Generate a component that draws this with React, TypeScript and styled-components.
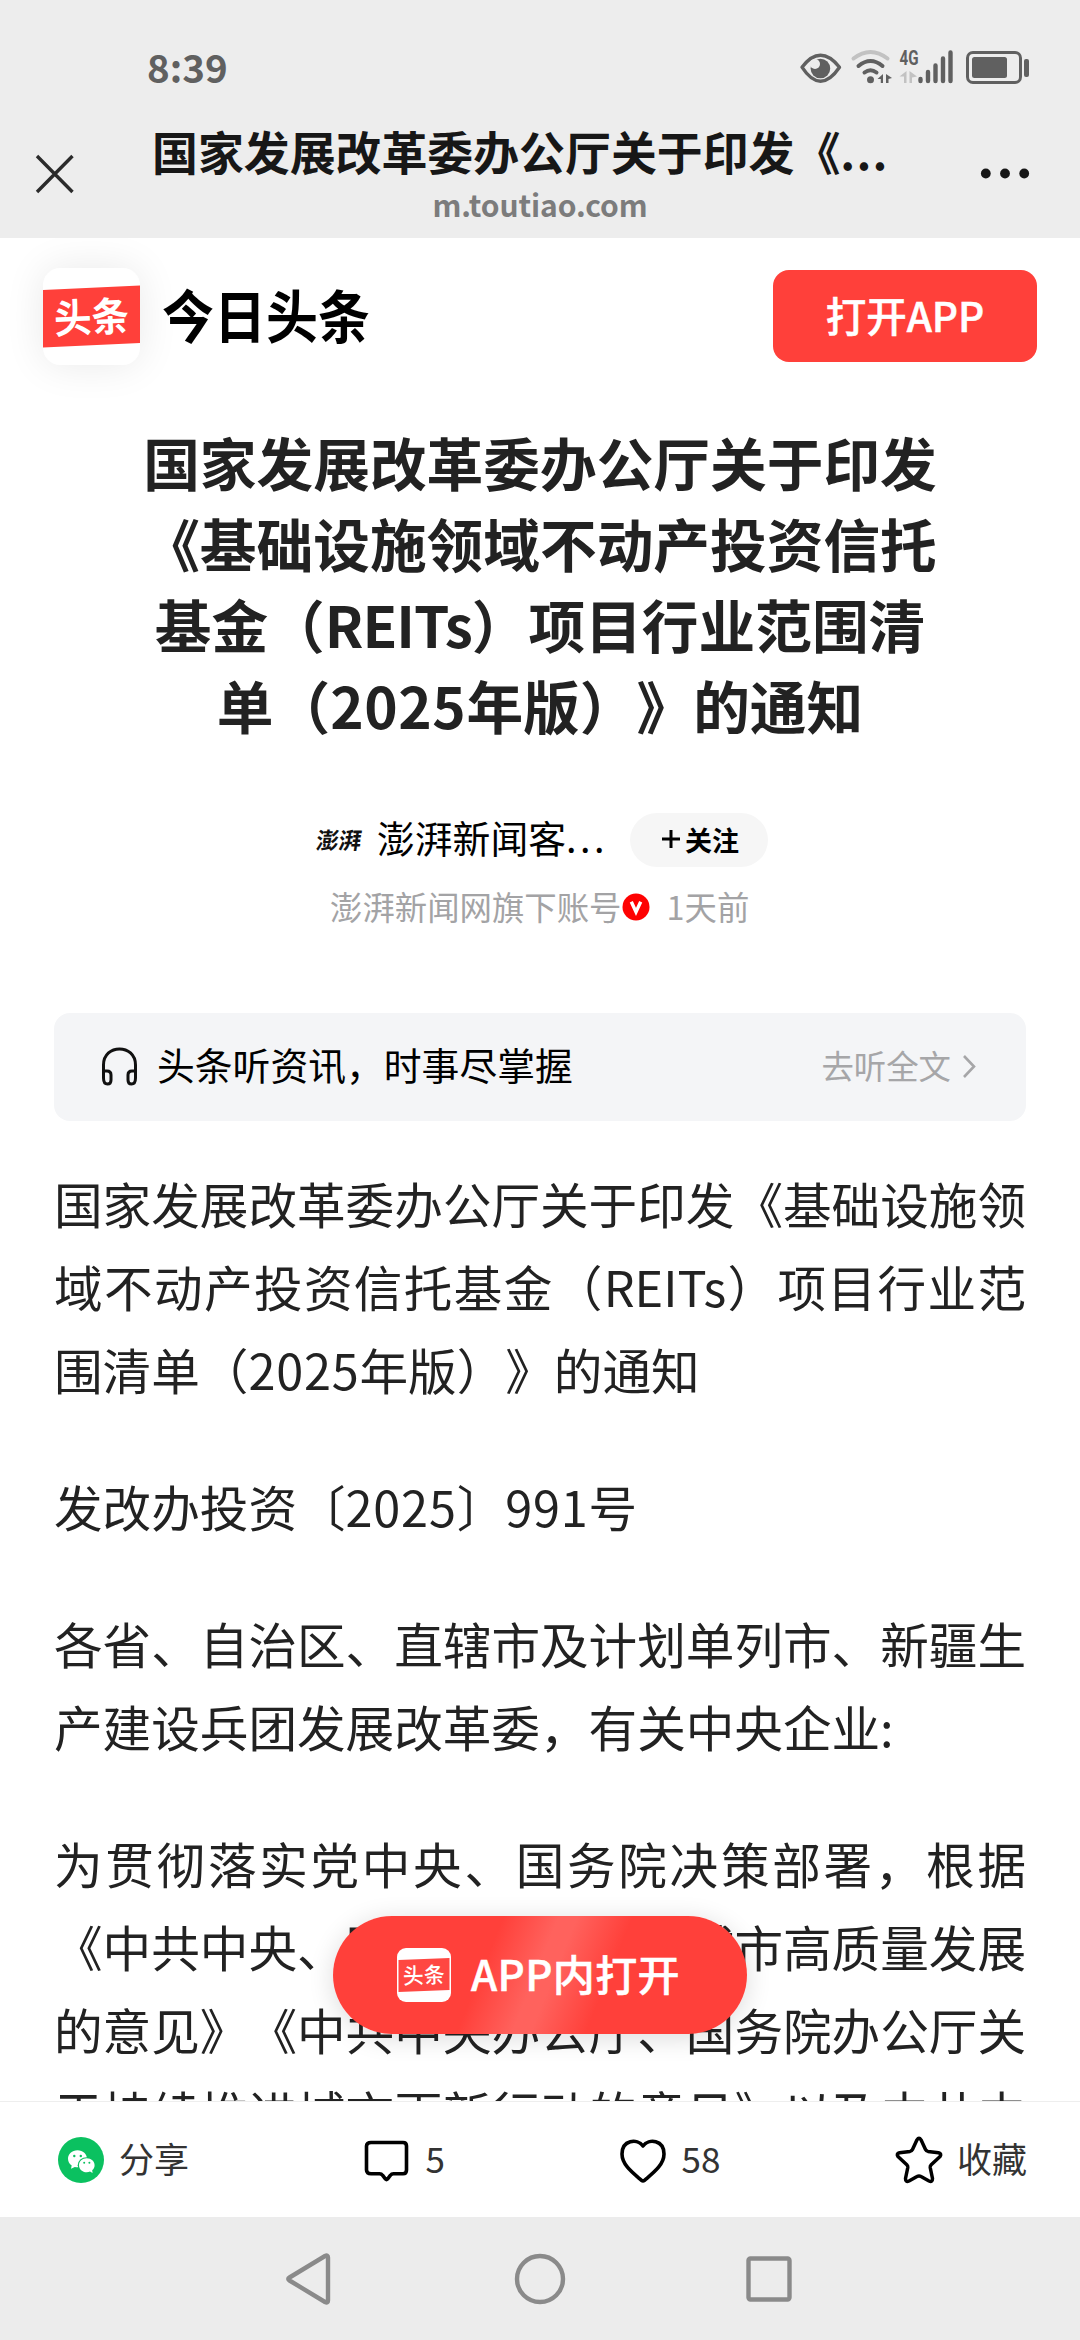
import React from "react";
import styled, { createGlobalStyle } from "styled-components";

const Global = createGlobalStyle`
  * { box-sizing: border-box; }
  body {
    margin: 0;
    background: #fff;
    font-family: "Noto Sans CJK SC", "Noto Sans", sans-serif;
    text-spacing-trim: space-all;
  }
  svg { display: block; flex: none; overflow: visible; }
`;

const Screen = styled.div`
  width: 1080px;
  height: 2340px;
  display: flex;
  flex-direction: column;
  overflow: hidden;
  background: #fff;
`;

/* ---- system status bar ---- */
const StatusBar = styled.header`
  height: 118px;
  flex: none;
  display: flex;
  align-items: center;
  justify-content: space-between;
  padding: 15px 50px 0 147px;
  background: #ededed;
`;
const Clock = styled.span`
  font-size: 38.5px;
  line-height: 50px;
  font-weight: 700;
  color: #606060;
  padding-bottom: 2px;
`;

/* ---- browser title bar ---- */
const TitleBar = styled.div`
  height: 120px;
  flex: none;
  display: grid;
  grid-template-columns: 152px 1fr 152px;
  background: #ededed;
`;
const CloseButton = styled.div`
  padding: 36px 0 0 35px;
`;
const MoreButton = styled.div`
  padding: 50px 0 0 52px;
`;
const TitleText = styled.div`
  display: flex;
  flex-direction: column;
  align-items: center;
  white-space: nowrap;
`;
const PageTitle = styled.div`
  width: 776px;
  font-size: 45.9px;
  line-height: 62px;
  margin-top: 1px;
  font-weight: 700;
  color: #171717;
`;
const Spaced = styled.span<{ $gap: number }>`
  letter-spacing: ${(p) => p.$gap}px;
`;
const PageHost = styled.div`
  font-size: 30px;
  line-height: 40px;
  margin-top: 3px;
  font-weight: 700;
  letter-spacing: -0.1px;
  color: #7c7c7c;
`;

/* ---- web page ---- */
const Page = styled.main`
  position: relative;
  flex: 1;
  min-height: 0;
  overflow: hidden;
  background: #fff;
`;
const SiteHeader = styled.div`
  display: flex;
  align-items: center;
  height: 156px;
  padding: 0 43px;
`;
const LogoTile = styled.div`
  width: 97px;
  height: 97px;
  border-radius: 17px;
  background: #fff;
  overflow: hidden;
  box-shadow: 0 0 40px rgba(0, 0, 0, 0.09);
`;
const Wordmark = styled.div`
  margin-left: 22px;
  padding-top: 2px;
  flex: 1;
`;
const OpenButton = styled.div`
  width: 264px;
  height: 92px;
  border-radius: 16px;
  background: #ff403a;
  color: #fff;
  font-size: 40.5px;
  line-height: 90px;
  font-weight: 500;
  -webkit-text-stroke: 0.5px #fff;
  text-align: center;
`;

const Headline = styled.h1`
  margin: 27px 0 0;
  font-size: 56.7px;
  line-height: 81px;
  font-weight: 700;
  color: #222;
  text-align: center;
  white-space: nowrap;
`;
const HeadlineRow = styled.span`
  display: block;
`;

const AuthorRow = styled.div`
  display: flex;
  align-items: center;
  height: 54px;
  margin-top: 68px;
  padding-left: 315px;
`;
const Author = styled.div`
  width: 253px;
  margin-left: 14px;
  font-size: 37.8px;
  line-height: 54px;
  padding-bottom: 6px;
  color: #000;
  white-space: nowrap;
`;
const FollowButton = styled.div`
  display: flex;
  align-items: center;
  gap: 4px;
  width: 138px;
  height: 54px;
  border-radius: 27px;
  padding: 0 0 2px 31px;
  background: #f6f6f6;
  font-size: 27px;
  font-weight: 700;
  color: #000;
`;
const MetaRow = styled.div`
  display: flex;
  align-items: center;
  height: 48px;
  margin-top: 16px;
  padding-left: 330px;
  font-size: 32.4px;
  line-height: 48px;
  color: #a3a3a5;
  white-space: nowrap;
`;
const MetaText = styled.span`
  padding-bottom: 3px;
`;
const MetaTime = styled(MetaText)`
  margin-left: 17px;
`;

const ListenCard = styled.div`
  display: flex;
  align-items: center;
  height: 108px;
  margin: 82px 54px 0;
  padding: 0 50px 0 47px;
  border-radius: 16px;
  background: #f4f5f7;
`;
const ListenTitle = styled.div`
  flex: 1;
  margin-left: 19px;
  padding-bottom: 8px;
  font-size: 37.8px;
  color: #000;
`;
const ListenMore = styled.div`
  margin-right: 11px;
  padding-bottom: 6px;
  font-size: 32.4px;
  color: #a6a6a8;
`;

const Article = styled.article`
  margin: 41px 54px 0;
  font-size: 48.6px;
  line-height: 83px;
  color: #222;
  white-space: nowrap;
`;
const Paragraph = styled.p`
  margin: 0 0 54px;
`;
const Row = styled.span<{ $full?: boolean }>`
  display: block;
  text-align: justify;
  text-align-last: ${(p) => (p.$full ? "justify" : "left")};
  text-justify: inter-character;
`;

const FloatingOpen = styled.div`
  position: absolute;
  left: 333px;
  bottom: 67px;
  width: 414px;
  height: 118px;
  display: flex;
  align-items: center;
  gap: 20px;
  padding-left: 64px;
  border-radius: 59px;
  background: linear-gradient(
    112deg,
    #ff403a 37%,
    #ff625d 49%,
    #ff625d 53%,
    #ff403a 65%
  );
  box-shadow: 0 4px 26px rgba(0, 0, 0, 0.14);
  color: #fff;
  font-size: 42px;
  font-weight: 500;
  letter-spacing: 0.4px;
  -webkit-text-stroke: 0.5px #fff;
  white-space: nowrap;
`;
const FloatingLabel = styled.span`
  padding-bottom: 6px;
`;

/* ---- bottom bars ---- */
const Toolbar = styled.footer`
  height: 116px;
  flex: none;
  display: flex;
  align-items: center;
  justify-content: space-between;
  padding: 0 53px 0 58px;
  border-top: 1px solid #eee;
  background: #fff;
`;
const Tool = styled.div<{ $gap: number }>`
  display: flex;
  align-items: center;
  gap: ${(p) => p.$gap}px;
  color: #333;
  font-size: 35px;
  line-height: 50px;
`;
const ToolLabel = styled.span`
  padding-bottom: 3px;
`;
const SystemNav = styled.nav`
  height: 123px;
  flex: none;
  display: flex;
  align-items: center;
  justify-content: center;
  gap: 180px;
  background: #ececec;
`;

const INK = "#606060";

const StatusIcons = () => (
  <svg width="232" height="40" viewBox="797 46 232 40">
    <path d="M801 67 Q810 55 819.500 55 Q829 55 838.500 67 Q829 81 819.500 81 Q810 81 801 67Z" fill="none" stroke={INK} strokeWidth="3.400" strokeLinejoin="round" transform="translate(0 -0.800)" />
    <circle cx="819.400" cy="67.500" r="9.800" fill={INK} />
    <circle cx="814" cy="63" r="5" fill="#ededed" />
    <g fill="none" strokeLinecap="round" strokeWidth="4">
      <path d="M852.500 57.500 Q869.500 44.500 886.500 57.500" stroke="#c2c2c2" />
      <path d="M857.500 65 Q869.500 55 881.500 65" stroke={INK} />
      <path d="M863.500 71.500 Q869.500 67 875.500 71.500" stroke={INK} />
    </g>
    <circle cx="869.500" cy="78.700" r="3.500" fill={INK} />
    <path d="M882 73 V82 H879.800 V78 H876.500Z M885 73 L891 77 L887.500 78 V82 H885Z" fill={INK} />
    <path d="M905.500 70 V82 H903 V75.500 H898.500Z M908.500 70 L916 75.500 L911 76.500 V82 H908.500Z" fill="#c2c2c2" />
    <text x="898.500" y="64.200" fontSize="20.500" fontWeight="700" textLength="19" lengthAdjust="spacingAndGlyphs" fill={INK} fontFamily="Roboto, sans-serif">4G</text>
    <g stroke={INK} strokeWidth="4.400" strokeLinecap="round">
      <path d="M919.500 78 V80 M927 71 V80 M934.500 64.500 V80 M942 57.500 V80 M949.500 51.500 V80" />
    </g>
    <rect x="966.500" y="51.500" width="53" height="30" rx="5.500" fill="none" stroke={INK} strokeWidth="3" />
    <rect x="971" y="56" width="35" height="21" rx="2.500" fill={INK} />
    <rect x="1023" y="58" width="5" height="18" rx="2" fill={INK} />
  </svg>
);

const Logo = () => (
  <svg width="97" height="97" viewBox="0 0 97 97">
    <path d="M0 22 L97 17.500 V75 L0 79.500Z" fill="#ff403a" />
    <text x="11" y="64" fontSize="40" fontWeight="700" textLength="75" lengthAdjust="spacingAndGlyphs" fill="#fff" transform="rotate(-2.700 48 48)">头条</text>
  </svg>
);

const SmallLogo = () => (
  <svg width="54" height="54" viewBox="0 0 54 54">
    <rect width="54" height="54" rx="9" fill="#fff" />
    <path d="M1.500 12 L52.500 10 V42 L1.500 44Z" fill="#ff4742" />
    <text x="6" y="35.300" fontSize="22" fontWeight="500" stroke="none" textLength="42" lengthAdjust="spacingAndGlyphs" fill="#fff" transform="rotate(-2 27 27)">头条</text>
  </svg>
);

const App = () => (
  <>
    <Global />
    <Screen>
      <StatusBar>
        <Clock>8:39</Clock>
        <StatusIcons />
      </StatusBar>
      <TitleBar>
        <CloseButton>
          <svg width="40" height="40" viewBox="0 0 40 40">
            <path d="M2 2 L37.500 38 M37.500 2 L2 38" stroke="#2b2b2b" strokeWidth="3.400" />
          </svg>
        </CloseButton>
        <TitleText>
          <PageTitle>国家发展改革委办公厅关于印发《<Spaced $gap={1.2}>...</Spaced></PageTitle>
          <PageHost>m.toutiao.com</PageHost>
        </TitleText>
        <MoreButton>
          <svg width="50" height="12" viewBox="0 0 50 12">
            <g fill="#171717">
              <circle cx="5.800" cy="5.500" r="4.900" />
              <circle cx="25" cy="5.500" r="4.900" />
              <circle cx="44.200" cy="5.500" r="4.900" />
            </g>
          </svg>
        </MoreButton>
      </TitleBar>

      <Page>
        <SiteHeader>
          <LogoTile><Logo /></LogoTile>
          <Wordmark>
            <svg width="210" height="64" viewBox="0 0 210 64">
              <text x="0" y="53" fontSize="57" fontWeight="700" textLength="208" lengthAdjust="spacingAndGlyphs" fill="#000">今日头条</text>
            </svg>
          </Wordmark>
          <OpenButton>打开APP</OpenButton>
        </SiteHeader>

        <Headline>
          <HeadlineRow>国家发展改革委办公厅关于印发</HeadlineRow>
          <HeadlineRow>《基础设施领域不动产投资信托</HeadlineRow>
          <HeadlineRow>基金（<Spaced $gap={-1}>REITs</Spaced>）项目行业范围清</HeadlineRow>
          <HeadlineRow>单（<Spaced $gap={0.6}>2025</Spaced>年版）》的通知</HeadlineRow>
        </Headline>

        <AuthorRow>
          <svg width="48" height="48" viewBox="0 0 48 48">
            <text x="1" y="33" fontSize="23" fontWeight="700" textLength="45" lengthAdjust="spacingAndGlyphs" fill="#111" transform="skewX(-8) translate(4 0)">澎湃</text>
          </svg>
          <Author>澎湃新闻客<Spaced $gap={3.5}>...</Spaced></Author>
          <FollowButton>
            <svg width="20" height="20" viewBox="0 0 20 20">
              <path d="M10 1 V19 M1 10 H19" stroke="#000" strokeWidth="3" />
            </svg>
            关注
          </FollowButton>
        </AuthorRow>
        <MetaRow>
          <MetaText>澎湃新闻网旗下账号</MetaText>
          <svg width="28" height="28" viewBox="0 0 28 28">
            <circle cx="14" cy="14" r="13.500" fill="#fe0202" />
            <path d="M9.300 8.800 L14 19 L18.700 8.800" fill="none" stroke="#fff" strokeWidth="3.400" />
          </svg>
          <MetaTime>1天前</MetaTime>
        </MetaRow>

        <ListenCard>
          <svg width="37" height="40" viewBox="0 0 37 40">
            <g fill="none" stroke="#111" strokeWidth="3">
              <path d="M2.500 31 V18 C2.500 -3.500 34.500 -3.500 34.500 18 V31" />
              <path d="M2.500 24 H6 Q10 24 10 28 V33 Q10 37 6.500 37 Q2.500 37 2.500 31Z" />
              <path d="M34.500 24 H31 Q27 24 27 28 V33 Q27 37 30.500 37 Q34.500 37 34.500 31Z" />
            </g>
          </svg>
          <ListenTitle>头条听资讯，时事尽掌握</ListenTitle>
          <ListenMore>去听全文</ListenMore>
          <svg width="14" height="26" viewBox="0 0 14 26">
            <path d="M2 2 L12 12.500 L2 23" fill="none" stroke="#a6a6a8" strokeWidth="2.600" />
          </svg>
        </ListenCard>

        <Article>
          <Paragraph>
            <Row $full>国家发展改革委办公厅关于印发《基础设施领</Row>
            <Row $full>域不动产投资信托基金（REITs）项目行业范</Row>
            <Row>围清单（<Spaced $gap={0.8}>2025</Spaced>年版）》的通知</Row>
          </Paragraph>
          <Paragraph>
            <Row>发改办投资〔<Spaced $gap={0.8}>2025</Spaced>〕<Spaced $gap={0.8}>991</Spaced>号</Row>
          </Paragraph>
          <Paragraph>
            <Row $full>各省、自治区、直辖市及计划单列市、新疆生</Row>
            <Row>产建设兵团发展改革委，有关中央企业:</Row>
          </Paragraph>
          <Paragraph>
            <Row $full>为贯彻落实党中央、国务院决策部署，根据</Row>
            <Row $full>《中共中央、国务院关于推动城市高质量发展</Row>
            <Row $full>的意见》《中共中央办公厅、国务院办公厅关</Row>
            <Row $full>于持续推进城市更新行动的意见》以及中共中</Row>
          </Paragraph>
        </Article>

        <FloatingOpen>
          <SmallLogo />
          <FloatingLabel>APP内打开</FloatingLabel>
        </FloatingOpen>
      </Page>

      <Toolbar>
        <Tool $gap={15}>
          <svg width="46" height="46" viewBox="0 0 46 46">
            <circle cx="23" cy="23" r="23" fill="#0bc160" />
            <path d="M19.500 13.200 C14 13.200 10 17 10 21.700 C10 24.500 11.500 27 13.700 28.500 L13 31.800 L16.800 29.900 C17.800 30.200 19 30.300 20.500 30.300 C25.500 30 29 26 29 21.700 C29 17 25 13.200 19.500 13.200Z" fill="#fff" />
            <ellipse cx="28.700" cy="28.200" rx="9" ry="8" fill="#0bc160" />
            <path d="M28.700 21.200 C24.300 21.200 21 24.300 21 28.200 C21 32 24.300 35.300 28.700 35.300 C30 35.300 31 35 32 34.600 L34.600 35.900 L34.200 33.300 C35.800 32 36.600 30.200 36.600 28.200 C36.600 24.300 33.200 21.200 28.700 21.200Z" fill="#fff" />
            <circle cx="16.300" cy="19" r="1.200" fill="#0bc160" />
            <circle cx="22.800" cy="19" r="1.200" fill="#0bc160" />
            <circle cx="26.200" cy="25.800" r="1" fill="#0bc160" />
            <circle cx="31.400" cy="25.800" r="1" fill="#0bc160" />
          </svg>
          <ToolLabel>分享</ToolLabel>
        </Tool>
        <Tool $gap={16}>
          <svg width="46" height="46" viewBox="0 0 46 46">
            <path d="M7 5.500 H39 Q42.500 5.500 42.500 9 V33 Q42.500 36.800 39 36.800 H29.500 Q27.500 36.800 26.500 38.200 L23.500 42 Q22.500 43 21.500 42 L18.500 38.200 Q17.500 36.800 15.500 36.800 H7 Q2.500 36.800 2.500 33 V9 Q2.500 5.500 7 5.500Z" fill="none" stroke="#000" strokeWidth="3.600" />
          </svg>
          <ToolLabel>5</ToolLabel>
        </Tool>
        <Tool $gap={16}>
          <svg width="46" height="46" viewBox="0 0 46 46">
            <path d="M23 9 C17 1 2 3 2 17 C2 28 13 36 21.500 43.300 Q23 44.500 24.500 43.300 C33 36 44 28 44 17 C44 3 29 1 23 9Z" fill="none" stroke="#000" strokeWidth="3.600" strokeLinejoin="round" />
          </svg>
          <ToolLabel>58</ToolLabel>
        </Tool>
        <Tool $gap={14}>
          <svg width="48" height="46" viewBox="0 0 48 46">
            <path d="M22 2.800 Q24 -0.500 26 2.800 L30.500 12.500 Q31.200 14 33 14.400 L43.500 15.800 Q47.200 16.800 44.800 19.800 L36.200 27.800 Q35 29 35.200 30.500 L37.500 41.500 Q37.500 45.500 34 44 L26 39.500 Q24 38.300 22 39.500 L14 44 Q10.500 45.500 10.500 41.500 L12.800 30.500 Q13 29 11.800 27.800 L3.200 19.800 Q0.800 16.800 4.500 15.800 L15 14.400 Q16.800 14 17.500 12.500Z" fill="none" stroke="#000" strokeWidth="3.500" strokeLinejoin="round" />
          </svg>
          <ToolLabel>收藏</ToolLabel>
        </Tool>
      </Toolbar>

      <SystemNav>
        <svg width="50" height="52" viewBox="0 0 50 52">
          <path d="M5.500 24.500 Q3 26 5.500 27.500 L41 49 Q44 50.500 44 47.500 V4.500 Q44 1.500 41 3Z" fill="none" stroke="#8a8a8a" strokeWidth="4.400" />
        </svg>
        <svg width="52" height="52" viewBox="0 0 52 52">
          <circle cx="26" cy="26" r="23" fill="none" stroke="#8a8a8a" strokeWidth="4.400" />
        </svg>
        <svg width="50" height="52" viewBox="0 0 50 52">
          <rect x="2.500" y="5.500" width="41" height="41" rx="2" fill="none" stroke="#8a8a8a" strokeWidth="4.400" />
        </svg>
      </SystemNav>
    </Screen>
  </>
);

export default App;
